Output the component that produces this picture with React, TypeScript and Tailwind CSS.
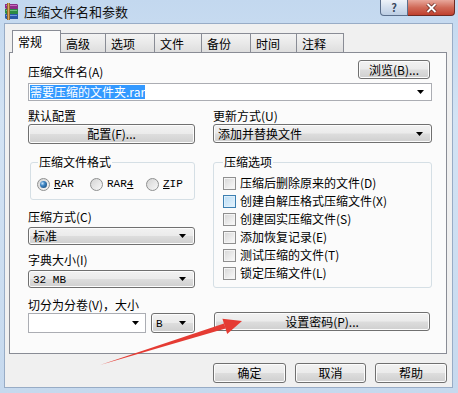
import React from "react";

function DropArrow() {
  return (
    <svg width="7" height="4" viewBox="0 0 7 4" className="shrink-0">
      <path d="M0 0H7L3.5 4Z" fill="#000" />
    </svg>
  );
}

function Btn({ children, className = "" }: { children: React.ReactNode; className?: string }) {
  return (
    <div
      className={`flex items-center justify-center rounded-[3px] border border-[#707070] bg-[linear-gradient(to_bottom,#f2f2f2_0%,#ebebeb_48%,#dddddd_52%,#cfcfcf_100%)] shadow-[inset_0_0_0_1px_#fcfcfc] text-[12px] leading-[14px] ${className}`}
    >
      {children}
    </div>
  );
}

function Select({ children, className = "" }: { children: React.ReactNode; className?: string }) {
  return (
    <div
      className={`flex items-center justify-between rounded-[3px] border border-[#707070] bg-[linear-gradient(to_bottom,#f2f2f2_0%,#ebebeb_48%,#dddddd_52%,#cfcfcf_100%)] shadow-[inset_0_0_0_1px_#fcfcfc] pl-[4px] pr-[8px] text-[12px] leading-[14px] ${className}`}
    >
      <span>{children}</span>
      <DropArrow />
    </div>
  );
}

function Radio({ checked }: { checked?: boolean }) {
  return (
    <div className="flex h-[13px] w-[13px] shrink-0 items-center justify-center rounded-full border border-[#8e8f8f] bg-[linear-gradient(to_bottom_right,#d4d4d4,#f8f8f8)]">
      {checked && (
        <div className="h-[7px] w-[7px] rounded-full bg-[radial-gradient(circle_at_35%_35%,#c7e3f9_0%,#3f86c4_35%,#123c68_100%)]" />
      )}
    </div>
  );
}

function Check({ hover }: { hover?: boolean }) {
  return hover ? (
    <div className="h-[13px] w-[13px] shrink-0 border border-[#3c7fb1] bg-[linear-gradient(to_bottom_right,#b9dcf5,#e6f3fc)] shadow-[inset_0_0_0_1px_#def0fc]" />
  ) : (
    <div className="h-[13px] w-[13px] shrink-0 border border-[#8f8f8f] bg-[linear-gradient(to_bottom_right,#d6d6d6,#fbfbfb)] shadow-[inset_0_0_0_1px_#f4f4f4]" />
  );
}

const tabs = [
  { label: "常规", w: 49 },
  { label: "高级", w: 46 },
  { label: "选项", w: 50 },
  { label: "文件", w: 48 },
  { label: "备份", w: 50 },
  { label: "时间", w: 47 },
  { label: "注释", w: 48 },
];

const options = [
  "压缩后删除原来的文件(D)",
  "创建自解压格式压缩文件(X)",
  "创建固实压缩文件(S)",
  "添加恢复记录(E)",
  "测试压缩的文件(T)",
  "锁定压缩文件(L)",
];

export default function App() {
  return (
    <div className="relative flex h-[393px] w-[458px] flex-col overflow-hidden bg-[linear-gradient(to_bottom,#c3d8ef,#d3e3f4_30%,#c6d9ee)] font-['Noto_Sans_CJK_SC','Noto_Sans',sans-serif] text-[12px] leading-[14px] text-black">
      {/* title bar */}
      <div className="flex h-[23px] shrink-0 items-start">
        <svg width="17" height="17" viewBox="0 0 17 17" className="ml-[3px] mt-[3px]">
          <path d="M2 1h12l1 1v4H3L2 5z" fill="#8a2d86" />
          <path d="M3 2h11v1H3z" fill="#c86ac0" />
          <path d="M2 6h13v5H3l-1-1z" fill="#2c8a43" />
          <path d="M3 7h11v1H3z" fill="#6cc07e" />
          <path d="M2 11h13v5H3l-1-1z" fill="#2a58a6" />
          <path d="M3 12h11v1H3z" fill="#6e9ae0" />
          <path d="M4 0h3v17H4z" fill="#9a6a2c" />
          <path d="M5 0h1v17H5z" fill="#d8a860" />
        </svg>
        <span className="ml-[4px] mt-[4px] text-[13px] leading-[16px] text-[#111]">压缩文件名和参数</span>
        <div className="flex-1" />
        <div className="mr-[3px] flex">
          <div className="flex h-[16px] w-[28px] items-center justify-center rounded-bl-[4px] border border-t-0 border-[#5b6f8c] bg-[linear-gradient(to_bottom,#eef3f9,#d3dfee_50%,#bccde3)] text-[11px] font-bold leading-none text-[#3a4a60]">
            ?
          </div>
          <div className="flex h-[16px] w-[47px] items-center justify-center rounded-br-[4px] border border-l-0 border-t-0 border-[#6e2a22] bg-[linear-gradient(to_bottom,#e8a89c,#d06a58_50%,#c0402e)]">
            <svg width="11" height="10" viewBox="0 0 11 10">
              <path d="M1.5 1l8 8M9.5 1l-8 8" stroke="#5a1e16" strokeWidth="3.4" />
              <path d="M1.5 1l8 8M9.5 1l-8 8" stroke="#fff" strokeWidth="2" />
            </svg>
          </div>
        </div>
      </div>

      {/* client area */}
      <div className="mb-[5px] ml-[4px] mr-[5px] flex flex-1 flex-col border border-[#98acc6] bg-[#f0f0f0] pt-[6px]">
        {/* tabs */}
        <div className="ml-[7px] flex items-end">
          {tabs.map((t, i) =>
            i === 0 ? (
              <div
                key={t.label}
                style={{ width: t.w }}
                className="relative z-10 h-[23px] border border-b-0 border-[#898c95] bg-[#fbfbfb] pl-[5px] pt-[4px]"
              >
                {t.label}
              </div>
            ) : (
              <div
                key={t.label}
                style={{ width: t.w }}
                className="-ml-px h-[20px] border border-b-0 border-[#898c95] bg-[linear-gradient(to_bottom,#f3f3f3,#e9e9e9_50%,#dcdcdc)] pl-[5px] pt-[3px]"
              >
                {t.label}
              </div>
            )
          )}
        </div>

        {/* panel */}
        <div className="relative -mt-px ml-[4px] mr-[5px] h-[302px] border border-[#898c95] bg-[#fbfbfb] pl-[18px] pr-[14px] pt-[7px]">
          <div className="flex h-[19px] items-end justify-between">
            <span>压缩文件名(A)</span>
            <Btn className="mr-[2px] h-[19px] w-[72px]">浏览(B)...</Btn>
          </div>
          <div className="mt-[4px] flex h-[18px] items-center justify-between border border-[#abadb3] bg-white pl-px pr-[7px]">
            <span className="bg-[#3399ff] text-white">需要压缩的文件夹.rar</span>
            <DropArrow />
          </div>

          <div className="mt-[8px] flex gap-[18px]">
            {/* left column */}
            <div className="flex w-[167px] flex-col">
              <span>默认配置</span>
              <Btn className="mt-px h-[20px]">配置(F)...</Btn>
              <fieldset className="mt-[11px] ml-[2px] rounded-[3px] border border-[#d5dfe5] pb-[6px] pl-[6px] pt-[6px]">
                <legend className="ml-[1px] px-px">压缩文件格式</legend>
                <div className="flex h-[18px] items-center font-['Liberation_Mono',monospace] text-[11px]">
                  <div className="flex w-[53px] items-center gap-[4px]">
                    <Radio checked />
                    <span>
                      <span className="underline">R</span>AR
                    </span>
                  </div>
                  <div className="flex w-[56px] items-center gap-[4px]">
                    <Radio />
                    <span>
                      RAR<span className="underline">4</span>
                    </span>
                  </div>
                  <div className="flex items-center gap-[4px]">
                    <Radio />
                    <span>
                      <span className="underline">Z</span>IP
                    </span>
                  </div>
                </div>
              </fieldset>
              <span className="mt-[10px]">压缩方式(C)</span>
              <Select className="mt-[3px] h-[18px]">标准</Select>
              <span className="mt-[8px]">字典大小(I)</span>
              <Select className="mt-[3px] h-[18px]">
                <span className="font-['Liberation_Mono',monospace] text-[11px]">32 MB</span>
              </Select>
              <span className="mt-[10px]">切分为分卷(V)，大小</span>
              <div className="mt-px flex h-[20px] gap-[5px]">
                <div className="flex w-[118px] items-center justify-end border border-[#abadb3] bg-white pr-[6px]">
                  <DropArrow />
                </div>
                <Select className="flex-1">
                  <span className="font-['Liberation_Mono',monospace] text-[11px]">B</span>
                </Select>
              </div>
            </div>

            {/* right column */}
            <div className="flex w-[219px] flex-col">
              <span>更新方式(U)</span>
              <Select className="mt-px h-[19px]">添加并替换文件</Select>
              <fieldset className="mt-[12px] rounded-[3px] border border-[#d5dfe5] pb-[5px] pl-[9px] pt-[5px]">
                <legend className="px-px">压缩选项</legend>
                {options.map((o, i) => (
                  <div key={o} className="flex h-[18px] items-center gap-[4px]">
                    <Check hover={i === 1} />
                    <span>{o}</span>
                  </div>
                ))}
              </fieldset>
              <Btn className="mt-[24px] mr-[2px] ml-px h-[19px]">设置密码(P)...</Btn>
            </div>
          </div>
        </div>

        {/* bottom buttons */}
        <div className="mr-[5px] mt-[9px] flex justify-end gap-[9px]">
          <Btn className="h-[20px] w-[73px] border-[#3c7fb1] shadow-[inset_0_0_0_1px_#bfe3fa]">确定</Btn>
          <Btn className="h-[20px] w-[71px]">取消</Btn>
          <Btn className="h-[20px] w-[72px]">帮助</Btn>
        </div>
      </div>

      {/* red annotation arrow */}
      <svg className="pointer-events-none absolute inset-0" width="458" height="393" viewBox="0 0 458 393">
        <polygon points="100,365 225.6,328.4 224,323.6" fill="#e53b33" />
        <polygon points="242,321 227.2,334 222.4,318.8" fill="#e53b33" />
      </svg>
    </div>
  );
}
